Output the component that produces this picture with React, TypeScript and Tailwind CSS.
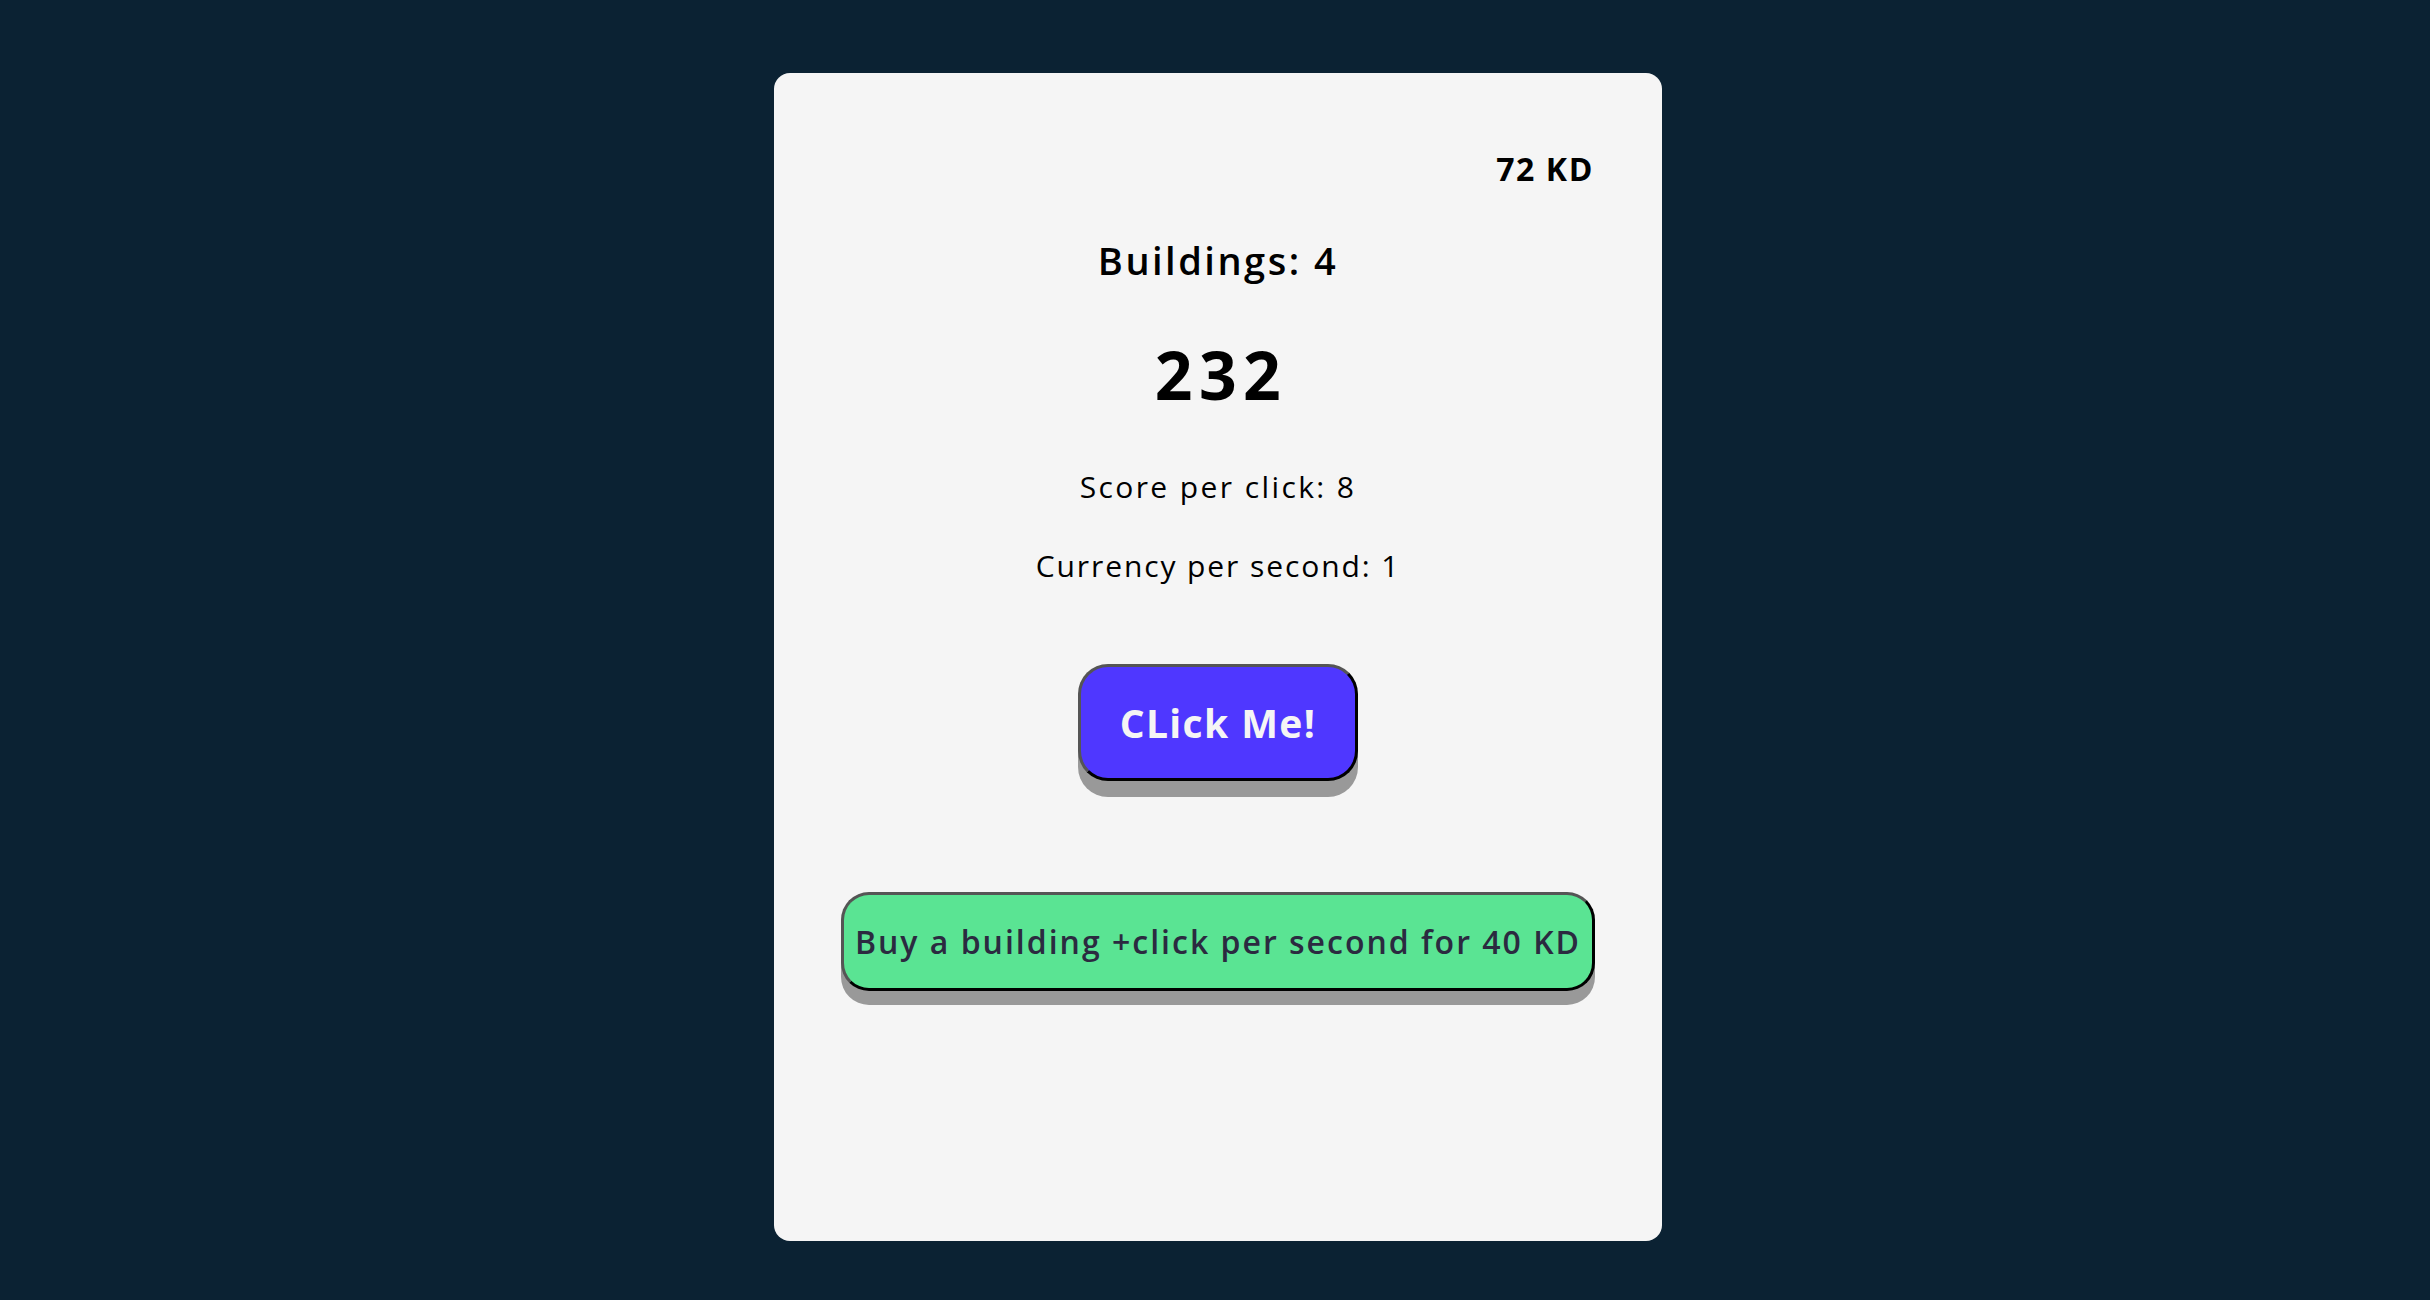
import { useState } from "react";

export default function App() {
  const [score, setScore] = useState(232);
  const [kd, setKd] = useState(72);
  const [buildings, setBuildings] = useState(4);
  const perClick = 8;
  const perSecond = 1;
  const price = 40;

  const buy = () => {
    if (kd < price) return;
    setKd(kd - price);
    setBuildings(buildings + 1);
  };

  return (
    <div className="min-h-screen w-full bg-[#0b2233] flex justify-center pl-[6px] pt-[73px] font-['Open_Sans',sans-serif]">
      <div className="w-[888px] h-[1168px] bg-[#f5f5f5] rounded-2xl flex flex-col items-center">
        <div className="self-end mr-[68px] mt-[80px] text-[32px] leading-none font-bold text-black tracking-[1.6px]">
          {kd} KD
        </div>
        <h2 className="mt-[56px] text-[38px] leading-none font-semibold text-black tracking-[2.5px]">
          Buildings: {buildings}
        </h2>
        <div className="mt-[62px] text-[66px] leading-none font-bold text-black tracking-[6.5px] pl-[6px]">
          {score}
        </div>
        <p className="mt-[65px] text-[30px] leading-none text-black tracking-[2.4px]">
          Score per click: {perClick}
        </p>
        <p className="mt-[49px] text-[30px] leading-none text-black tracking-[1.9px]">
          Currency per second: {perSecond}
        </p>
        <button
          onClick={() => setScore(score + perClick)}
          className="mt-[83px] w-[280px] h-[117px] flex items-center justify-center rounded-[30px] bg-[#4f37ff] border-[3px] border-t-[#555555] border-l-[#555555] border-r-black border-b-black shadow-[0_16px_0_#999999] text-[39px] leading-none font-bold text-[#f5f5f5] tracking-[1.4px]"
        >
          CLick Me!
        </button>
        <button
          onClick={buy}
          className="mt-[111px] w-[754px] h-[99px] flex items-center justify-center rounded-[28px] bg-[#5ae493] border-[3px] border-t-[#555555] border-l-[#555555] border-r-black border-b-black shadow-[0_14px_0_#999999] text-[32px] leading-none font-semibold text-[#2b2a40] tracking-[2px]"
        >
          Buy a building +click per second for {price} KD
        </button>
      </div>
    </div>
  );
}
